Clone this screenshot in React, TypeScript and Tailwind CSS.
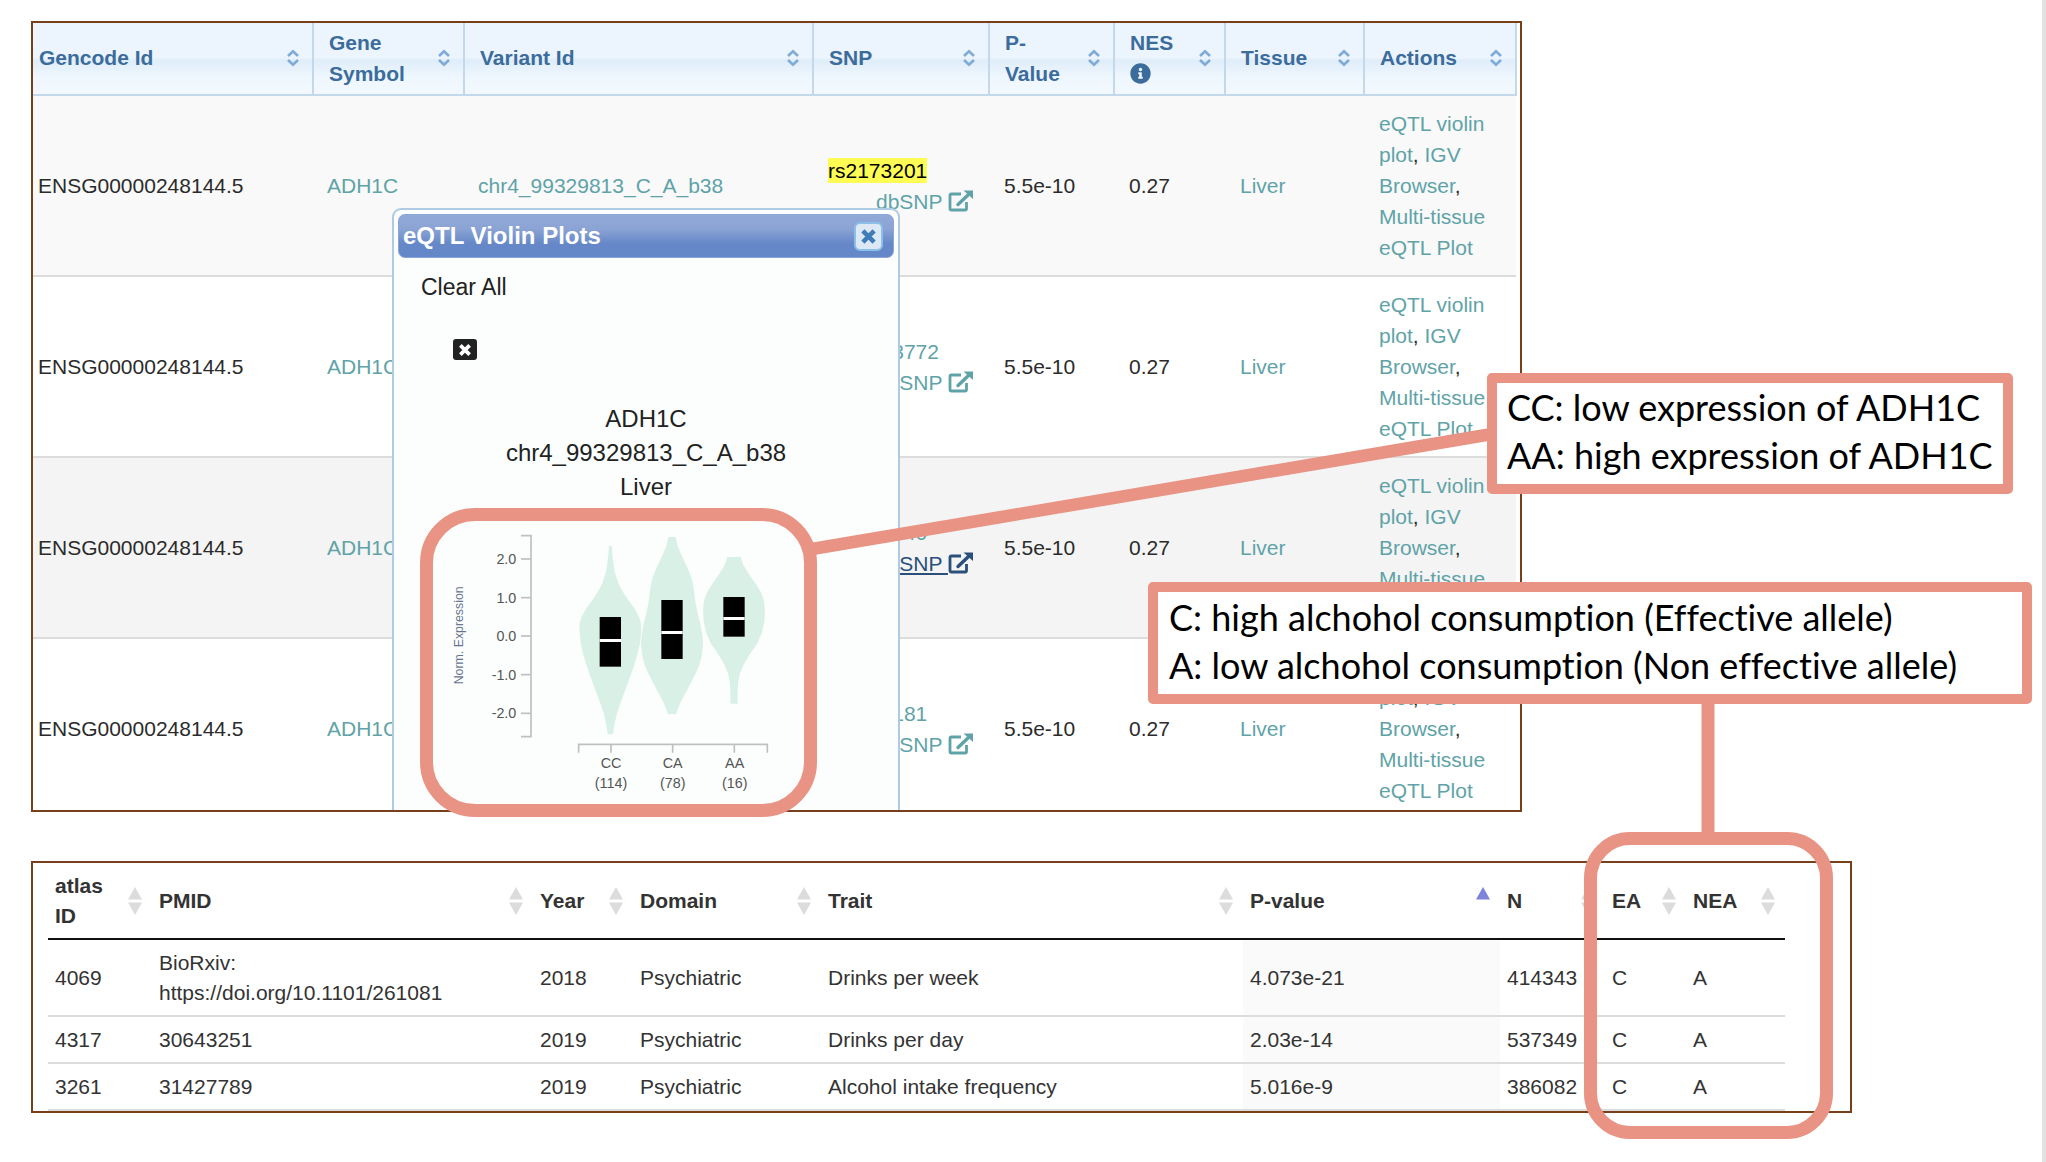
import React from "react";
import { FaInfoCircle } from "react-icons/fa";

const TEAL = "text-[#5fa3a8]";

function SortChevrons() {
  return (
    <svg aria-hidden="true" width="14" height="18" viewBox="0 0 14 18" className="shrink-0" fill="none" stroke="#7fabd8" strokeWidth="2.6">
      <path d="M2 7 L7 2.2 L12 7" />
      <path d="M2 11 L7 15.8 L12 11" />
    </svg>
  );
}

function SortTriangles({ sorted = false }: { sorted?: boolean }) {
  return (
    <svg aria-hidden="true" width="14" height="28" viewBox="0 0 14 28" className="shrink-0">
      <path d="M7 0 L14 12.5 H0 Z" fill={sorted ? "#7d84da" : "#dcdcdc"} />
      {!sorted && <path d="M0 15.5 H14 L7 28 Z" fill="#dcdcdc" />}
    </svg>
  );
}

function ExternalLinkIcon() {
  return (
    <svg aria-hidden="true" width="25" height="22" viewBox="0 0 25 22" className="inline-block align-[-3px]">
      <path d="M13 4 H3.5 Q2 4 2 5.5 V18.5 Q2 20 3.5 20 H17 Q18.5 20 18.5 18.5 V12" fill="none" stroke="currentColor" strokeWidth="2.8" />
      <path d="M10 14.5 L20 5" stroke="currentColor" strokeWidth="3.4" strokeLinecap="round" />
      <path d="M15.5 0.5 H25 V9 Z" fill="currentColor" />
    </svg>
  );
}

const eqtlColumns: { key: string; label: React.ReactNode; pad: string }[] = [
  { key: "gencode", label: "Gencode Id", pad: "pl-[6px]" },
  { key: "gene", label: "Gene Symbol", pad: "pl-[15px]" },
  { key: "variant", label: "Variant Id", pad: "pl-[15px]" },
  { key: "snp", label: "SNP", pad: "pl-[15px]" },
  { key: "p", label: <>P-<br />Value</>, pad: "pl-[15px]" },
  { key: "nes", label: <>NES<FaInfoCircle className="my-[5px] block size-[21px]" /></>, pad: "pl-[15px]" },
  { key: "tissue", label: "Tissue", pad: "pl-[15px]" },
  { key: "actions", label: "Actions", pad: "pl-[15px]" },
];

const eqtlRows = [
  { variant: "chr4_99329813_C_A_b38", snp: "rs2173201", marked: true, active: false, bg: "bg-[#f9f9f9]" },
  { variant: "chr4_99332569_G_A_b38", snp: "rs17033772", marked: false, active: false, bg: "bg-white" },
  { variant: "chr4_99335812_T_C_b38", snp: "rs1789140", marked: false, active: true, bg: "bg-[#f4f4f4]" },
  { variant: "chr4_99337021_A_G_b38", snp: "rs1693181", marked: false, active: false, bg: "bg-white" },
];

function EqtlTable() {
  return (
    <table className="w-full table-fixed border-collapse text-left text-[21px] leading-[31px] text-[#2b2b2b]">
      <colgroup>
        <col className="w-[280px]" />
        <col className="w-[151px]" />
        <col className="w-[349px]" />
        <col className="w-[176px]" />
        <col className="w-[125px]" />
        <col className="w-[111px]" />
        <col className="w-[139px]" />
        <col className="w-[152px]" />
      </colgroup>
      <thead>
        <tr className="bg-[linear-gradient(#ecf4fd_0%,#ecf4fd_48%,#dfedf9_52%,#eff7fe_76%,#f2f8fe_100%)]">
          {eqtlColumns.map((c) => (
            <th key={c.key} scope="col" className="h-[72px] border-r-2 border-b-2 border-[#c3d8ea] p-0 pb-[2px] font-bold text-[#3b6c9c]">
              <button type="button" className={`flex w-full items-center justify-between pr-[12px] text-left ${c.pad}`}>
                <span>{c.label}</span>
                <SortChevrons />
              </button>
            </th>
          ))}
        </tr>
      </thead>
      <tbody>
        {eqtlRows.map((r) => (
          <tr key={r.snp} className={`border-b-2 border-[#dcdcdc] last:border-b-0 [&>td]:pt-[12px] [&>td]:pb-[12px] last:[&>td]:pb-[4px] ${r.bg}`}>
            <td className="pl-[5px]">ENSG00000248144.5</td>
            <td className="pl-[14px]"><a href="#gene" className={TEAL}>ADH1C</a></td>
            <td className="pl-[14px]"><a href="#variant" className={TEAL}>{r.variant}</a></td>
            <td className="pr-[16px] pl-[15px]">
              <a href="#snp" className={r.marked ? "bg-[#fffd54] py-[1px] text-black" : TEAL}>{r.snp}</a>
              <a href="#dbsnp" className={`block text-right whitespace-nowrap ${r.active ? "text-[#2a4f7a] underline" : TEAL}`}>
                dbSNP <ExternalLinkIcon />
              </a>
            </td>
            <td className="pl-[15px]">5.5e-10</td>
            <td className="pl-[15px]">0.27</td>
            <td className="pl-[15px]"><a href="#tissue" className={TEAL}>Liver</a></td>
            <td className="pl-[15px]">
              <a href="#violin" className={TEAL}>eQTL violin plot</a>, <a href="#igv" className={TEAL}>IGV Browser</a>,{" "}
              <a href="#multi" className={TEAL}>Multi-tissue eQTL Plot</a>
            </td>
          </tr>
        ))}
      </tbody>
    </table>
  );
}

type Violin = { cx: number; label: string; n: number; box: [number, number]; median: number; outline: [number, number][] };

const violins: Violin[] = [
  {
    cx: 631, label: "CC", n: 114, box: [381, 530], median: 451,
    outline: [[4, 168], [7, 205], [13, 245], [24, 280], [36, 303], [52, 328], [72, 355], [86, 380], [92, 400], [93, 420], [89, 460], [82, 490], [72, 525], [58, 565], [43, 605], [30, 640], [20, 670], [12, 705], [8, 733]],
  },
  {
    cx: 816, label: "CA", n: 78, box: [330, 507], median: 427,
    outline: [[11, 141], [16, 165], [28, 195], [47, 235], [60, 268], [66, 300], [70, 335], [77, 370], [86, 405], [92, 440], [93, 465], [89, 500], [80, 530], [64, 565], [47, 597], [32, 625], [20, 650], [12, 672]],
  },
  {
    cx: 1002, label: "AA", n: 16, box: [321, 440], median: 385,
    outline: [[20, 201], [28, 225], [45, 253], [65, 281], [82, 308], [90, 332], [93, 360], [91, 395], [83, 430], [70, 460], [48, 492], [30, 522], [18, 550], [13, 575], [11, 605], [11, 641]],
  },
];

function violinPath(v: Violin) {
  const right = v.outline.map(([w, y]) => `${v.cx + w} ${y}`);
  const left = [...v.outline].reverse().map(([w, y]) => `${v.cx - w} ${y}`);
  return `M${right.join(" L")} L${left.join(" L")} Z`;
}

const yTicks = [
  { y: 207, label: "2.0" },
  { y: 323, label: "1.0" },
  { y: 438, label: "0.0" },
  { y: 554, label: "-1.0" },
  { y: 670, label: "-2.0" },
];

function ViolinChart() {
  return (
    <svg role="img" aria-label="Violin plot of normalized expression by genotype" width="503" height="300" viewBox="-18 42 1509 900" className="block" fontFamily="'Liberation Sans', Arial, sans-serif">
      <g fill="none" stroke="#bfbfbf" strokeWidth="5">
        <path d="M363 137 H393 V740 H363" />
        {yTicks.map((t) => (
          <path key={t.y} d={`M363 ${t.y} H393`} />
        ))}
        <path d="M536 788 V763 H1102 V788 M633 763 V788 M818 763 V788 M1003 763 V788" />
      </g>
      <g fill="#555" fontSize="43">
        {yTicks.map((t) => (
          <text key={t.y} x="349" y={t.y + 15} textAnchor="end">{t.label}</text>
        ))}
        {violins.map((v) => (
          <React.Fragment key={v.label}>
            <text x={v.cx + 2} y="833" textAnchor="middle">{v.label}</text>
            <text x={v.cx + 2} y="894" textAnchor="middle">({v.n})</text>
          </React.Fragment>
        ))}
      </g>
      <text transform="translate(189 436) rotate(-90)" textAnchor="middle" fontSize="37" fill="#68758f">Norm. Expression</text>
      {violins.map((v) => (
        <g key={v.label}>
          <path d={violinPath(v)} fill="#d9f0e6" />
          <rect x={v.cx - 32} y={v.box[0]} width="64" height={v.box[1] - v.box[0]} fill="#000" />
          <rect x={v.cx - 32} y={v.median - 4} width="64" height="9" fill="#fff" />
        </g>
      ))}
    </svg>
  );
}

function ViolinDialog() {
  return (
    <section role="dialog" aria-labelledby="violin-title" className="absolute top-[185px] bottom-0 left-[359px] w-[508px] rounded-t-[9px] border-2 border-b-0 border-[#aecbe3] bg-[#fcfefd] text-[24px] leading-[34px] text-[#222]">
      <header className="m-[4px] mb-0 flex h-[44px] items-center justify-between rounded-[7px] border border-[#8ba5d8] bg-[linear-gradient(#91a9d7_0%,#8ba4d4_32%,#6688c8_68%,#6487c7_100%)] pr-[10px] pl-[4px]">
        <h2 id="violin-title" className="text-[24px] font-bold text-white">eQTL Violin Plots</h2>
        <button type="button" aria-label="Close" className="flex size-[29px] items-center justify-center rounded-[6px] border-2 border-[#8cbfe9] bg-[#dce9f5]">
          <svg aria-hidden="true" width="15" height="15" viewBox="0 0 16 16" stroke="#3f7cb8" strokeWidth="4.8">
            <path d="M2 2 L14 14 M14 2 L2 14" />
          </svg>
        </button>
      </header>
      <button type="button" className="mt-[12px] ml-[27px] block text-[23px]">Clear All</button>
      <button type="button" aria-label="Remove plot" className="mt-[35px] ml-[59px] flex h-[21px] w-[24px] items-center justify-center rounded-[3px] bg-[#222]">
        <svg aria-hidden="true" width="12" height="12" viewBox="0 0 13 13" stroke="#fff" strokeWidth="4">
          <path d="M1.5 1.5 L11.5 11.5 M11.5 1.5 L1.5 11.5" />
        </svg>
      </button>
      <div className="mt-[42px] text-center">
        <p>ADH1C</p>
        <p>chr4_99329813_C_A_b38</p>
        <p>Liver</p>
      </div>
      <ViolinChart />
    </section>
  );
}

const atlasColumns = ["atlas ID", "PMID", "Year", "Domain", "Trait", "P-value", "N", "EA", "NEA"];

const atlasRows: React.ReactNode[][] = [
  ["4069", <>BioRxiv:<br />https://doi.org/10.1101/261081</>, "2018", "Psychiatric", "Drinks per week", "4.073e-21", "414343", "C", "A"],
  ["4317", "30643251", "2019", "Psychiatric", "Drinks per day", "2.03e-14", "537349", "C", "A"],
  ["3261", "31427789", "2019", "Psychiatric", "Alcohol intake frequency", "5.016e-9", "386082", "C", "A"],
];

function AtlasTable() {
  return (
    <table className="w-full table-fixed border-collapse text-left text-[21px] leading-[30px] text-[#333]">
      <colgroup>
        <col className="w-[104px]" />
        <col className="w-[381px]" />
        <col className="w-[100px]" />
        <col className="w-[188px]" />
        <col className="w-[422px]" />
        <col className="w-[257px]" />
        <col className="w-[105px]" />
        <col className="w-[81px]" />
        <col className="w-[99px]" />
      </colgroup>
      <thead>
        <tr className="border-b-2 border-[#111]">
          {atlasColumns.map((c) => (
            <th key={c} scope="col" className="h-[76px] p-0 font-bold">
              <button type="button" className="flex w-full items-center justify-between pr-[10px] pl-[7px] text-left">
                <span>{c}</span>
                <SortTriangles sorted={c === "P-value"} />
              </button>
            </th>
          ))}
        </tr>
      </thead>
      <tbody>
        {atlasRows.map((row, i) => (
          <tr key={i} className="border-b-2 border-[#dcdcdc]">
            {row.map((cell, j) => (
              <td key={j} className={`pt-[8px] pb-[7px] pl-[7px] whitespace-nowrap ${j === 5 ? "bg-[#fafafa]" : ""}`}>{cell}</td>
            ))}
          </tr>
        ))}
      </tbody>
    </table>
  );
}

export default function App() {
  return (
    <main className="relative min-h-screen overflow-hidden border-r-4 border-[#e2e2e2] bg-white pt-[21px] pl-[31px] font-['Liberation_Sans',Arial,sans-serif]">
      <div className="relative w-full max-w-[1491px] overflow-hidden border-2 border-[#773f1a] pr-[4px]">
        <EqtlTable />
        <ViolinDialog />
      </div>

      <div className="mt-[49px] w-full max-w-[1821px] border-2 border-[#773f1a] pr-[65px] pl-[15px]">
        <AtlasTable />
      </div>

      <svg aria-hidden="true" width="2046" height="1162" viewBox="0 0 2046 1162" className="pointer-events-none absolute top-0 left-0 max-w-none" stroke="#e89383">
        <path d="M812 549 L1492 434" strokeWidth="12.5" />
        <path d="M1708 700 V838" strokeWidth="13" />
      </svg>
      <div className="pointer-events-none absolute top-[508px] left-[420px] h-[309px] w-[397px] rounded-[55px] border-[13px] border-[#e89383]" />
      <div className="pointer-events-none absolute top-[832px] left-[1584px] h-[307px] w-[249px] rounded-[46px] border-[13px] border-[#e89383]" />

      <aside className="absolute top-[373px] left-[1487px] w-[526px] rounded-[5px] border-[10px] border-[#e89383] bg-white pb-[5px] pl-[10px] font-['Lato',sans-serif] text-[36px] leading-[48px] whitespace-nowrap text-black [font-variant-ligatures:none]">
        <p>CC: low expression of ADH1C</p>
        <p>AA: high expression of ADH1C</p>
      </aside>
      <aside className="absolute top-[582px] left-[1148px] w-[884px] rounded-[5px] border-[10px] border-[#e89383] bg-white pt-px pb-[5px] pl-[11px] font-['Lato',sans-serif] text-[36px] leading-[48px] whitespace-nowrap text-black [font-variant-ligatures:none]">
        <p>C: high alchohol consumption (Effective allele)</p>
        <p>A: low alchohol consumption (Non effective allele)</p>
      </aside>
    </main>
  );
}
